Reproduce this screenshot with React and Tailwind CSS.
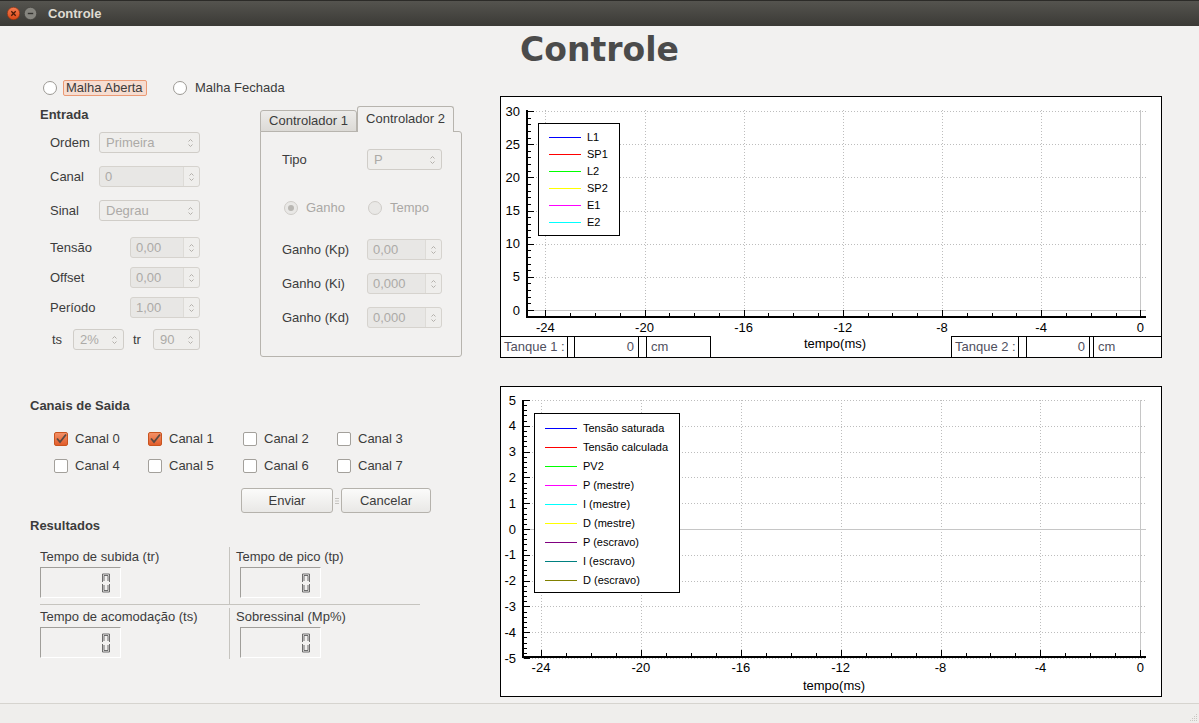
import React from 'react';

const ui = "font-['Liberation_Sans',Arial,sans-serif]";

const Arrows = () => (
  <svg width="7" height="12" viewBox="0 0 7 12" className="shrink-0">
    <path d="M1.5 4.5 L3.5 2.5 L5.5 4.5" fill="none" stroke="#b3b0ab" strokeWidth="1" />
    <path d="M1.5 7.5 L3.5 9.5 L5.5 7.5" fill="none" stroke="#b3b0ab" strokeWidth="1" />
  </svg>
);

const Combo = ({ className, value }) => (
  <div className={`h-[21px] flex items-center justify-between rounded-[3px] border border-[#d0cdc8] bg-[#efeeec] pl-[6px] pr-[5px] text-[#acaaa7] ${className}`}>
    <span>{value}</span>
    <Arrows />
  </div>
);

const Spin = ({ className, value }) => (
  <div className={`h-[21px] flex rounded-[3px] border border-[#d6d3ce] bg-[#e8e7e5] text-[#acaaa7] ${className}`}>
    <div className="flex-1 flex items-center pl-[5px]">{value}</div>
    <div className="w-[16px] flex items-center justify-center border-l border-[#dddbd7] bg-[#efeeec] rounded-r-[3px]">
      <Arrows />
    </div>
  </div>
);

const Radio = ({ className = '', disabled, checked }) => (
  <div
    className={`w-[14px] h-[14px] shrink-0 rounded-full border flex items-center justify-center ${
      disabled ? 'border-[#cfccc8] bg-[#e9e8e6]' : 'border-[#9c9994] bg-white'
    } ${className}`}
  >
    {checked && <div className="w-[6px] h-[6px] rounded-full bg-[#b9b7b3]" />}
  </div>
);

const Check = ({ checked }) =>
  checked ? (
    <div className="w-[14px] h-[14px] shrink-0 rounded-[2px] border border-[#c9541f] bg-gradient-to-b from-[#f39066] to-[#e25d2a] flex items-center justify-center">
      <svg width="12" height="12" viewBox="0 0 12 12">
        <path d="M2 5.5 L5 9 L11 1.5" fill="none" stroke="#5b4a42" strokeWidth="1.8" />
      </svg>
    </div>
  ) : (
    <div className="w-[14px] h-[14px] shrink-0 rounded-[2px] border border-[#a3a09b] bg-white" />
  );

const Button = ({ className, children }) => (
  <div className={`h-[25px] flex items-center justify-center rounded-[3px] border border-[#b5b2ac] bg-gradient-to-b from-[#fbfbfa] to-[#e9e8e6] text-[#3c3c3c] ${className}`}>
    {children}
  </div>
);

// hollow seven-segment "0"
const LcdZero = () => (
  <svg width="10" height="20" viewBox="0 0 10 20">
    <g fill="none" stroke="#5d5d5d" strokeWidth="0.9">
      <path d="M1.5 9 V1 H8.5 V9" />
      <path d="M3 8 V2.5 H7 V8" />
      <path d="M1.5 11 V19 H8.5 V11" />
      <path d="M3 12 V17.5 H7 V12" />
    </g>
  </svg>
);

const Lcd = () => (
  <div className="w-[81px] h-[31px] flex items-center justify-end pr-[9px] border border-t-[#a09e9a] border-l-[#a09e9a] border-b-white border-r-white">
    <LcdZero />
  </div>
);

const TitleBar = () => (
  <div className="h-[26px] shrink-0 flex items-center bg-gradient-to-b from-[#55544f] to-[#3b3a36] border-t border-[#2c2b28]">
    <svg width="13" height="13" viewBox="0 0 13 13" className="ml-[7px]">
      <defs>
        <linearGradient id="cls" x1="0" y1="0" x2="0" y2="1">
          <stop offset="0" stopColor="#f57d52" />
          <stop offset="1" stopColor="#dc4815" />
        </linearGradient>
      </defs>
      <circle cx="6.5" cy="6.5" r="6.2" fill="url(#cls)" stroke="#8f2f0d" strokeWidth="0.6" />
      <path d="M4.3 4.3 L8.7 8.7 M8.7 4.3 L4.3 8.7" stroke="#4a1a08" strokeWidth="1.3" />
    </svg>
    <svg width="13" height="13" viewBox="0 0 13 13" className="ml-[4px]">
      <circle cx="6.5" cy="6.5" r="6.2" fill="#86857f" stroke="#3a3935" strokeWidth="0.6" />
      <path d="M3.8 6.5 H9.2" stroke="#33322f" strokeWidth="1.4" />
    </svg>
    <span className="ml-[11px] text-[13px] font-bold text-[#dfdbd2]">Controle</span>
  </div>
);

const EntradaRow = ({ mt, label, labelW, children }) => (
  <div className={`h-[21px] flex items-center pl-[50px] ${mt}`}>
    <span className={`shrink-0 ${labelW}`}>{label}</span>
    {children}
  </div>
);

const TabPane = () => (
  <div className="w-[202px] flex flex-col">
    <div className="h-[25px] flex items-end">
      <div className="w-[97px] h-[22px] -mb-px flex items-center justify-center rounded-t-[3px] border border-[#b7b4ae] bg-gradient-to-b from-[#edecea] to-[#dcdad6]">
        Controlador 1
      </div>
      <div className="relative z-10 w-[97px] h-[26px] -mb-px flex items-center justify-center rounded-t-[3px] border border-b-0 border-[#b7b4ae] bg-[#f2f1f0] pb-[1px]">
        Controlador 2
      </div>
    </div>
    <div className="h-[226px] rounded-[3px] rounded-tl-none border border-[#b7b4ae] bg-[#f2f1f0] flex flex-col">
      <div className="mt-[17px] h-[21px] flex items-center pl-[21px]">
        <span className="w-[85px] shrink-0">Tipo</span>
        <Combo className="w-[75px]" value="P" />
      </div>
      <div className="mt-[30px] h-[16px] flex items-center pl-[23px] text-[#aaa8a5]">
        <div className="w-[84px] flex items-center">
          <Radio disabled checked />
          <span className="ml-[8px]">Ganho</span>
        </div>
        <Radio disabled />
        <span className="ml-[8px]">Tempo</span>
      </div>
      <div className="mt-[23px] h-[21px] flex items-center pl-[21px]">
        <span className="w-[85px] shrink-0">Ganho (Kp)</span>
        <Spin className="w-[75px]" value="0,00" />
      </div>
      <div className="mt-[13px] h-[21px] flex items-center pl-[21px]">
        <span className="w-[85px] shrink-0">Ganho (Ki)</span>
        <Spin className="w-[75px]" value="0,000" />
      </div>
      <div className="mt-[13px] h-[21px] flex items-center pl-[21px]">
        <span className="w-[85px] shrink-0">Ganho (Kd)</span>
        <Spin className="w-[75px]" value="0,000" />
      </div>
    </div>
  </div>
);

const LeftPanel = () => (
  <div className="w-[500px] shrink-0 flex flex-col">
    {/* Malha */}
    <div className="mt-[10px] h-[16px] flex items-center pl-[43px]">
      <Radio />
      <span className="ml-[6px] h-[16px] w-[84px] flex items-center pl-[2px] rounded-[2px] border border-[#eb9a75] bg-[#f6ddd1]">
        Malha Aberta
      </span>
      <Radio className="ml-[26px]" />
      <span className="ml-[8px]">Malha Fechada</span>
    </div>

    {/* Entrada + Controladores */}
    <div className="mt-[10px] flex">
      <div className="w-[260px] flex flex-col">
        <div className="h-[18px] flex items-center pl-[40px] font-bold">Entrada</div>
        <EntradaRow mt="mt-[8px]" label="Ordem" labelW="w-[49px]">
          <Combo className="w-[101px]" value="Primeira" />
        </EntradaRow>
        <EntradaRow mt="mt-[13px]" label="Canal" labelW="w-[49px]">
          <Spin className="w-[101px]" value="0" />
        </EntradaRow>
        <EntradaRow mt="mt-[13px]" label="Sinal" labelW="w-[49px]">
          <Combo className="w-[101px]" value="Degrau" />
        </EntradaRow>
        <EntradaRow mt="mt-[16px]" label="Tensão" labelW="w-[80px]">
          <Spin className="w-[70px]" value="0,00" />
        </EntradaRow>
        <EntradaRow mt="mt-[9px]" label="Offset" labelW="w-[80px]">
          <Spin className="w-[70px]" value="0,00" />
        </EntradaRow>
        <EntradaRow mt="mt-[9px]" label="Período" labelW="w-[80px]">
          <Spin className="w-[70px]" value="1,00" />
        </EntradaRow>
        <div className="mt-[11px] h-[21px] flex items-center pl-[52px]">
          <span className="w-[21px] shrink-0">ts</span>
          <Combo className="w-[51px]" value="2%" />
          <span className="ml-[9px] w-[20px] shrink-0">tr</span>
          <Combo className="w-[47px]" value="90" />
        </div>
      </div>
      <TabPane />
    </div>

    {/* Canais de Saida */}
    <div className="mt-[40px] h-[18px] flex items-center pl-[30px] font-bold">Canais de Saida</div>
    {[[0, 1, 2, 3], [4, 5, 6, 7]].map((row, ri) => (
      <div key={ri} className={`h-[16px] flex items-center pl-[54px] ${ri === 0 ? 'mt-[16px]' : 'mt-[11px]'}`}>
        {row.map((c, ci) => (
          <div key={c} className={`flex items-center ${ci === 1 ? 'w-[95px]' : 'w-[94px]'}`}>
            <Check checked={c < 2} />
            <span className="ml-[7px]">Canal {c}</span>
          </div>
        ))}
      </div>
    ))}
    <div className="mt-[14px] flex items-center pl-[241px]">
      <Button className="w-[92px]">Enviar</Button>
      <div className="w-[8px] flex justify-center">
        <svg width="4" height="10" viewBox="0 0 4 10">
          <path d="M0 2.5 H4 M0 5 H4 M0 7.5 H4" stroke="#c4c2be" strokeWidth="1" />
        </svg>
      </div>
      <Button className="w-[90px]">Cancelar</Button>
    </div>

    {/* Resultados */}
    <div className="mt-[4px] h-[18px] flex items-center pl-[30px] font-bold">Resultados</div>
    <div className="mt-[12px] ml-[40px] w-[380px] flex flex-col">
      <div className="h-[57px] flex">
        <div className="w-[189px] pt-[2px] flex flex-col">
          <div className="h-[16px] flex items-center">Tempo de subida (tr)</div>
          <div className="mt-[2px]"><Lcd /></div>
        </div>
        <div className="w-px bg-[#c6c4bf]" />
        <div className="pl-[6px] pt-[2px] flex flex-col">
          <div className="h-[16px] flex items-center">Tempo de pico (tp)</div>
          <div className="mt-[2px] ml-[4px]"><Lcd /></div>
        </div>
      </div>
      <div className="h-px bg-[#c6c4bf]" />
      <div className="h-[54px] flex">
        <div className="w-[189px] pt-[4px] flex flex-col">
          <div className="h-[16px] flex items-center">Tempo de acomodação (ts)</div>
          <div className="mt-[2px]"><Lcd /></div>
        </div>
        <div className="w-px mt-[3px] bg-[#c6c4bf]" />
        <div className="pl-[6px] pt-[4px] flex flex-col">
          <div className="h-[16px] flex items-center">Sobressinal (Mp%)</div>
          <div className="mt-[2px] ml-[4px]"><Lcd /></div>
        </div>
      </div>
    </div>
  </div>
);

const range = (a, b, step = 1) => {
  const out = [];
  for (let i = 0; a + i * step <= b + 1e-9; i++) out.push(Math.round((a + i * step) * 100) / 100);
  return out;
};

const Plot = ({ w, h, ax, ay, top, right, yOf, xOf, yMajor, yMinor, xMajor, xMinor, yLabelX, xLabelY, titleX, titleY }) => {
  const px = (v) => Math.round(v) + 0.5;
  return (
    <svg width={w} height={h} className="block overflow-visible" fontFamily="Liberation Sans, Arial, sans-serif" fontSize="13">
      {yMajor.filter((v) => v !== 0).map((v) => (
        <line key={'gy' + v} x1={ax} x2={right} y1={px(yOf(v))} y2={px(yOf(v))} stroke="#bdbdbd" strokeDasharray="1 2" />
      ))}
      {xMajor.filter((t) => t !== 0).map((t) => (
        <line key={'gx' + t} x1={px(xOf(t))} x2={px(xOf(t))} y1={top} y2={ay} stroke="#bdbdbd" strokeDasharray="1 2" />
      ))}
      <line x1={ax} x2={right} y1={px(yOf(0))} y2={px(yOf(0))} stroke="#c6c6c6" />
      <line x1={px(xOf(0))} x2={px(xOf(0))} y1={top} y2={ay} stroke="#c6c6c6" />

      <line x1={ax} x2={ax} y1={top} y2={ay + 1} stroke="#000" strokeWidth="2" />
      <line x1={ax - 1} x2={right} y1={ay} y2={ay} stroke="#000" strokeWidth="2" />
      {yMinor.map((v) => (
        <line key={'ym' + v} x1={ax + 1} x2={ax + 4} y1={px(yOf(v))} y2={px(yOf(v))} stroke="#000" />
      ))}
      {yMajor.map((v) => (
        <line key={'yM' + v} x1={ax + 1} x2={ax + 7} y1={px(yOf(v))} y2={px(yOf(v))} stroke="#000" />
      ))}
      {xMinor.map((t) => (
        <line key={'xm' + t} x1={px(xOf(t))} x2={px(xOf(t))} y1={ay - 1} y2={ay - 4} stroke="#000" />
      ))}
      {xMajor.map((t) => (
        <line key={'xM' + t} x1={px(xOf(t))} x2={px(xOf(t))} y1={ay - 1} y2={ay - 7} stroke="#000" />
      ))}
      {yMajor.map((v) => (
        <text key={'ly' + v} x={yLabelX} y={yOf(v)} textAnchor="end" dominantBaseline="central" fill="#000">
          {v}
        </text>
      ))}
      {xMajor.map((t) => (
        <text key={'lx' + t} x={xOf(t)} y={xLabelY} textAnchor="middle" dominantBaseline="central" fill="#000">
          {t}
        </text>
      ))}
      <text x={titleX} y={titleY} textAnchor="middle" dominantBaseline="central" fill="#000">
        tempo(ms)
      </text>
    </svg>
  );
};

const Legend = ({ className, rowH, items }) => (
  <div className={`absolute border border-black bg-white pt-[5px] flex flex-col text-[11px] text-black font-['Liberation_Sans',Arial,sans-serif] ${className}`}>
    {items.map(([label, color]) => (
      <div key={label} className={`flex items-center ${rowH}`}>
        <div className="ml-[10px] w-[32px] h-px" style={{ backgroundColor: color }} />
        <span className="ml-[6px]">{label}</span>
      </div>
    ))}
  </div>
);

const Cell = ({ className, children }) => (
  <div className={`border-t border-black flex items-center ${className}`}>{children}</div>
);

const Chart1 = () => (
  <div className="relative w-[662px] h-[262px] border border-black bg-white flex flex-col">
    <Plot
      w={660}
      h={239}
      ax={26}
      ay={220}
      top={13}
      right={645}
      yOf={(v) => 213 - v * 6.633}
      xOf={(t) => 639.3 + t * 24.79}
      yMajor={range(0, 30, 5)}
      yMinor={range(0, 30, 1)}
      xMajor={range(-24, 0, 4)}
      xMinor={range(-24, 0, 1)}
      yLabelX={19}
      xLabelY={230}
      titleX={334}
      titleY={246}
    />
    <div className="h-[21px] flex justify-between text-[13px] text-[#50505e]">
      <div className="flex">
        <Cell className="w-[67px] border-r pl-[3px]">Tanque 1 :</Cell>
        <Cell className="w-[7px] border-r" />
        <Cell className="w-[64px] border-r justify-end pr-[4px]">0</Cell>
        <Cell className="w-[8px] border-r" />
        <Cell className="w-[64px] border-r pl-[4px]">cm</Cell>
      </div>
      <div className="flex">
        <Cell className="w-[68px] border-l border-r pl-[3px]">Tanque 2 :</Cell>
        <Cell className="w-[8px] border-r" />
        <Cell className="w-[63px] border-r justify-end pr-[4px]">0</Cell>
        <Cell className="w-[4px] border-r" />
        <Cell className="w-[67px] pl-[4px]">cm</Cell>
      </div>
    </div>
    <Legend
      className="left-[37px] top-[26px] w-[82px] h-[113px]"
      rowH="h-[17px]"
      items={[
        ['L1', '#0000ff'],
        ['SP1', '#ff0000'],
        ['L2', '#00ff00'],
        ['SP2', '#ffff00'],
        ['E1', '#ff00ff'],
        ['E2', '#00ffff'],
      ]}
    />
  </div>
);

const Chart2 = () => (
  <div className="relative w-[662px] h-[311px] border border-black bg-white">
    <Plot
      w={660}
      h={309}
      ax={22}
      ay={270}
      top={13}
      right={645}
      yOf={(v) => 142 - v * 25.8}
      xOf={(t) => 639.3 + t * 24.97}
      yMajor={range(-5, 5, 1)}
      yMinor={range(-5, 5, 0.2)}
      xMajor={range(-24, 0, 4)}
      xMinor={range(-24, 0, 1)}
      yLabelX={15}
      xLabelY={280}
      titleX={333}
      titleY={298}
    />
    <Legend
      className="left-[33px] top-[26px] w-[146px] h-[180px]"
      rowH="h-[19px]"
      items={[
        ['Tensão saturada', '#0000ff'],
        ['Tensão calculada', '#ff0000'],
        ['PV2', '#00ff00'],
        ['P (mestre)', '#ff00ff'],
        ['I (mestre)', '#00ffff'],
        ['D (mestre)', '#ffff00'],
        ['P (escravo)', '#800080'],
        ['I (escravo)', '#008080'],
        ['D (escravo)', '#808000'],
      ]}
    />
  </div>
);

export default function App() {
  return (
    <div className={`w-[1199px] h-[723px] flex flex-col bg-[#f2f1f0] text-[13px] text-[#3c3c3c] overflow-hidden ${ui}`}>
      <TitleBar />
      <div className="flex-1 flex flex-col">
        <h1 className="h-[44px] pt-[4px] flex items-center justify-center font-['DejaVu_Sans',sans-serif] font-bold text-[33px] leading-[40px] text-[#4b4b4b]">
          Controle
        </h1>
        <div className="flex-1 flex">
          <LeftPanel />
          <div className="flex flex-col">
            <div className="mt-[26px]">
              <Chart1 />
            </div>
            <div className="mt-[28px]">
              <Chart2 />
            </div>
          </div>
        </div>
      </div>
      <div className="h-[20px] shrink-0 border-t border-[#d6d4cf] bg-[#efeeec] flex justify-end items-end">
        <svg width="10" height="10" viewBox="0 0 10 10" className="mr-[1px] mb-[1px]">
          <g fill="#c9c7c2">
            <rect x="8" y="2" width="1" height="1" />
            <rect x="6" y="4" width="1" height="1" />
            <rect x="8" y="4" width="1" height="1" />
            <rect x="4" y="6" width="1" height="1" />
            <rect x="6" y="6" width="1" height="1" />
            <rect x="8" y="6" width="1" height="1" />
            <rect x="2" y="8" width="1" height="1" />
            <rect x="4" y="8" width="1" height="1" />
            <rect x="6" y="8" width="1" height="1" />
            <rect x="8" y="8" width="1" height="1" />
          </g>
        </svg>
      </div>
    </div>
  );
}
